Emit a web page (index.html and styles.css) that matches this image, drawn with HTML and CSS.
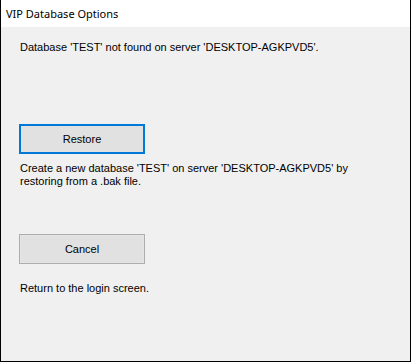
FILE: index.html
```html
<!DOCTYPE html>
<html>
<head>
<meta charset="utf-8">
<link rel="stylesheet" href="styles.css">
</head>
<body>
<div class="window">
  <div class="titlebar"><span class="title">VIP Database Options</span></div>
  <div class="content">
    <p class="msg">Database 'TEST' not found on server 'DESKTOP-AGKPVD5'.</p>
    <button class="btn btn-focus">Restore</button>
    <p class="desc">Create a new database 'TEST' on server 'DESKTOP-AGKPVD5' by<br>restoring from a .bak file.</p>
    <button class="btn btn-cancel">Cancel</button>
    <p class="desc2">Return to the login screen.</p>
  </div>
</div>
</body>
</html>
```

FILE: styles.css
```css
html, body {
  margin: 0;
  padding: 0;
  background: #ffffff;
}
.window {
  width: 409px;
  height: 361px;
  border-left: 1px solid #000;
  border-right: 1px solid #000;
  border-bottom: 1px solid #000;
  background: #f0f0f0;
  display: flex;
  flex-direction: column;
  font-family: "Liberation Sans", Arial, sans-serif;
  font-size: 11px;
  color: #000;
}
.titlebar {
  height: 27px;
  background: #ffffff;
  display: flex;
  align-items: center;
  padding-left: 5px;
}
.title {
  font-family: "Noto Sans", "Open Sans", sans-serif;
  font-size: 11px;
  color: #000;
  margin-top: -1px;
}
.content {
  display: flex;
  flex-direction: column;
  align-items: flex-start;
  padding-left: 19px;
}
p {
  margin: 0;
  line-height: 13px;
}
.msg {
  margin-top: 14px;
}
.btn {
  width: 126px;
  height: 30px;
  background: #e1e1e1;
  font-family: "Liberation Sans", Arial, sans-serif;
  font-size: 11px;
  color: #000;
  padding: 0;
  margin-left: -1px;
}
.btn-focus {
  margin-top: 70px;
  border: 2px solid #0078d7;
}
.btn-cancel {
  margin-top: 46px;
  border: 1px solid #adadad;
  box-shadow: inset 0 0 0 1px #e5e5e5;
}
.desc {
  margin-top: 8px;
}
.desc2 {
  margin-top: 18px;
}
```
